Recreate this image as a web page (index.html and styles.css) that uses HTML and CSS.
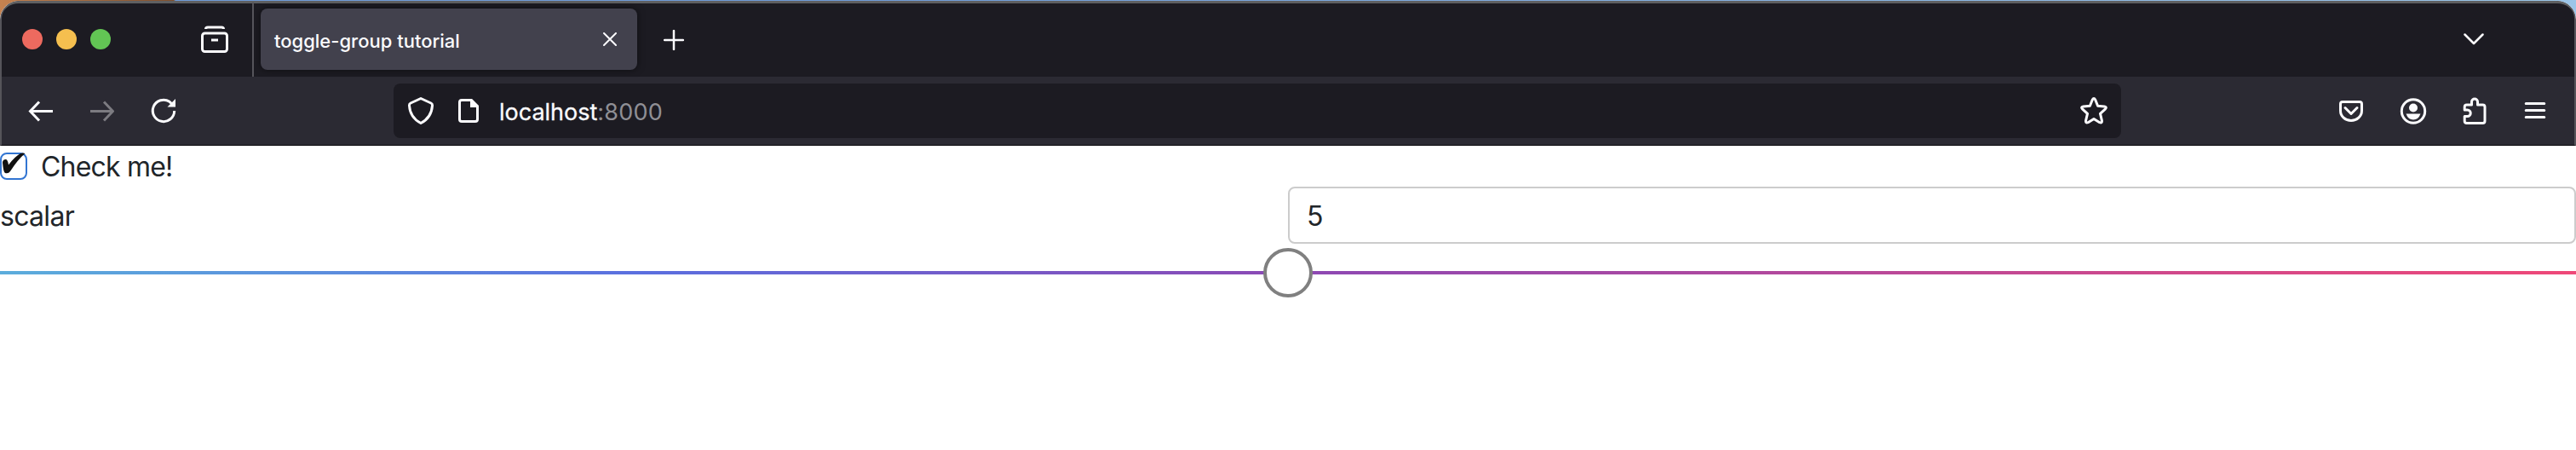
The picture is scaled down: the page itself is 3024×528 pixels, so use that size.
FILE: index.html
```html
<!DOCTYPE html>
<html lang="en">
<head>
<meta charset="utf-8">
<title>toggle-group tutorial</title>
<link rel="stylesheet" href="styles.css">
</head>
<body>
<div class="window">
<header class="chrome">
  <div class="tabbar">
    <div class="lights"><i class="light red"></i><i class="light yellow"></i><i class="light green"></i></div>
    <svg class="icon view" viewBox="0 0 32 32"><path d="M5.500 4Q5.500 2 8 2H24Q26.500 2 26.500 4"/><rect x="1.500" y="9" width="29" height="21.500" rx="3"/><path d="M12 17H20"/></svg>
    <div class="tab"><span class="tab-title">toggle-group tutorial</span>
      <svg class="close" viewBox="0 0 16 16"><path d="M1 1L15 15M15 1L1 15"/></svg></div>
    <svg class="plus" viewBox="0 0 24 24"><path d="M12 1V23M1 12H23"/></svg>
    <svg class="chevron" viewBox="0 0 24 14"><path d="M1.500 1.500L12 12L22.500 1.500"/></svg>
  </div>
  <div class="toolbar">
    <svg class="icon back" viewBox="0 0 32 32"><path d="M32 16.500H6M16 5.500L5.500 16.500L16 27.500"/></svg>
    <svg class="icon forward" viewBox="0 0 32 32"><path d="M4 16.500H30M20 5.500L30.500 16.500L20 27.500"/></svg>
    <svg class="icon reload" viewBox="0 0 32 32"><path d="M28.700 16A12.700 12.700 0 1 1 23 5.300L26 8"/><path class="solid" d="M30 2V11.500H20.500Z"/></svg>
    <div class="urlbar">
      <svg class="icon shield" viewBox="0 0 32 32"><path d="M16 1.500L28 7Q29.700 7.800 29.500 10Q28.500 24 16 30.500Q3.500 24 2.500 10Q2.300 7.800 4 7Z"/></svg>
      <svg class="icon doc" viewBox="0 0 32 32"><path d="M19 3.500H8Q5.500 3.500 5.500 6V26Q5.500 28.500 8 28.500H24Q26.500 28.500 26.500 26V11Z"/><path class="solid" d="M18 2H20L28 10V12H18Z"/></svg>
      <span class="host">localhost</span><span class="port">:8000</span>
      <svg class="icon star" viewBox="0 0 32 32"><path d="M14.300 3Q16 .2 17.700 3L20.600 10.200L28.500 10.900Q31.600 11.400 29.500 13.800L23.500 19.400L25.400 27.300Q25.900 30.900 22.800 29.700L16 25.400L9.200 29.700Q6.100 30.900 6.600 27.300L8.500 19.400L2.500 13.800Q.4 11.400 3.500 10.900L11.400 10.200Z"/></svg>
    </div>
    <svg class="icon pocket" viewBox="0 0 32 32"><path d="M6 5.500H26Q28.500 5.500 28.500 8V16A12.500 11.500 0 0 1 3.500 16V8Q3.500 5.500 6 5.500Z"/><path d="M9 12.500L16 19.500L23 12.500"/></svg>
    <svg class="icon account" viewBox="0 0 32 32"><circle cx="16" cy="16.500" r="13.700"/><circle class="solid" cx="16" cy="12.500" r="5"/><path class="solid" d="M7.500 19.500H24.500Q22 26.500 16 26.500T7.500 19.500Z"/></svg>
    <svg class="icon puzzle" viewBox="0 0 32 32"><path d="M4.200 15V11.500Q4.200 9 6.700 9H12.500V5.500A3.500 3.500 0 0 1 19.500 5.500V9H25.500Q28 9 28 11.500V28Q28 30.500 25.500 30.500H6.700Q4.200 30.500 4.200 28V22.500H7.500A3.750 3.750 0 0 0 7.500 15Z"/></svg>
    <svg class="icon menu" viewBox="0 0 32 32"><path d="M5.200 7.500H26.800M5.200 15.500H26.800M5.200 23.500H26.800"/></svg>
  </div>
</header>
<main class="page">
  <label class="check-row"><span class="checkbox"><svg class="tick" viewBox="0 0 32 32"><path d="M3 12Q3 8 7 8Q9 8 10 14.500Q17 5 24 1Q27 0 29.500 1Q21 8 12 22Q10 25 6 24Q4 23 3 12Z"/></svg></span><span class="check-text">Check me!</span></label>
  <div class="field"><span class="field-label">scalar</span><div class="field-input">5</div></div>
  <div class="slider"><div class="track"></div><div class="thumb"></div></div>
</main>
</div>
</body>
</html>
```

FILE: styles.css
```css
* { box-sizing: border-box; }
body {
  margin: 0;
  height: 528px;
  overflow: hidden;
  font-family: Inter, "Liberation Sans", sans-serif;
  background: linear-gradient(90deg, #c58250 0, #80502e 204px, #6f9bd8 206px, #6f9bd8 1000px, #9bc5e8 3024px);
}
.window {
  height: 527px;
  margin-top: 1px;
  overflow: hidden;
  border-radius: 22px 22px 0 0;
  background: #fff;
}
.chrome {
  height: 170px;
  border: solid #55545a;
  border-width: 0 2px;
  border-radius: 22px 22px 0 0;
  border-bottom: 1px solid #09080c;
  background: #2b2a33;
}
svg { display: block; flex: none; fill: none; stroke: #fbfbfe; stroke-width: 3; stroke-linecap: round; stroke-linejoin: round; }
.icon { width: 32px; height: 32px; }
.solid { fill: #fbfbfe; stroke: none; }
.tabbar {
  display: flex;
  align-items: center;
  height: 89px;
  padding: 0 106px 2px 24px;
  background: #1c1b22;
  border-top: 3px solid #5f6062;
  border-radius: 20px 20px 0 0;
}
.lights { display: flex; gap: 16px; }
.light { width: 24px; height: 24px; border-radius: 50%; }
.red { background: #ed6a5f; }
.yellow { background: #f5bf4f; }
.green { background: #62c554; }
.view { margin-left: 106px; stroke-linecap: butt; }
.tab {
  display: flex;
  align-items: center;
  justify-content: space-between;
  width: 442px;
  height: 72px;
  margin-left: 38px;
  padding: 0 24px 0 16px;
  border-radius: 8px;
  background: #42414d;
  box-shadow: 0 0 8px rgba(0, 0, 0, .5);
  position: relative;
}
.tab::before {
  content: "";
  position: absolute;
  left: -10px;
  top: -7px;
  width: 2px;
  height: 87px;
  background: #56555b;
}
.tab-title { padding-top: 4px; color: #fbfbfe; font-size: 22px; font-weight: 500; white-space: nowrap; }
.close { width: 16px; height: 16px; stroke-width: 2; }
.plus { width: 24px; height: 24px; margin: 2px 0 0 31px; stroke-width: 2.500; }
.chevron { width: 24px; height: 14px; margin-left: auto; stroke-width: 2.500; }
.toolbar { display: flex; align-items: center; height: 80px; padding: 0 28px; }
.back, .forward { stroke-linecap: butt; stroke-linejoin: miter; }
.forward { margin-left: 40px; stroke: #7c7b81; }
.reload { margin-left: 42px; stroke-linecap: butt; }
.urlbar {
  display: flex;
  flex: none;
  align-items: center;
  width: 2028px;
  height: 64px;
  margin-left: 254px;
  padding: 0 16px;
  border-radius: 8px;
  background: #1c1b22;
  font-size: 27px;
}
.doc { margin: 0 20px 0 24px; }
.host, .port { padding-top: 2px; }
.host { color: #fbfbfe; -webkit-text-stroke: .3px; }
.port { color: #8f8f95; letter-spacing: .2px; }
.star { margin-left: auto; }
.pocket { margin-left: 254px; }
.account { margin-left: 41px; }
.puzzle { margin-left: 40px; }
.menu { margin-left: 39px; }
.page { color: #212529; font-size: 32px; line-height: 48px; }
.check-row { display: flex; align-items: center; height: 48px; }
.checkbox { width: 32px; height: 32px; border: 2px solid #3275d2; border-radius: 8px; }
.tick { width: 32px; height: 32px; margin: -2px; stroke: none; fill: #111; }
.check-text { margin-left: 16px; padding-top: 2px; letter-spacing: -.8px; }
.field { display: grid; grid-template-columns: 1fr 1fr; height: 67px; align-items: center; }
.field-label { padding-top: 2px; letter-spacing: -.7px; }
.field-input { height: 67px; padding: 9px 20px 0; border: 2px solid #ccc; border-radius: 8px; }
.slider { display: flex; align-items: center; justify-content: center; height: 68px; position: relative; }
.track { width: 100%; height: 4px; background: linear-gradient(90deg, #5caddc, #5b6fdf 25%, #8c49b4 50%, #ef4878); }
.thumb { position: absolute; width: 58px; height: 58px; border: 4px solid #808080; border-radius: 50%; background: #fff; }
```
